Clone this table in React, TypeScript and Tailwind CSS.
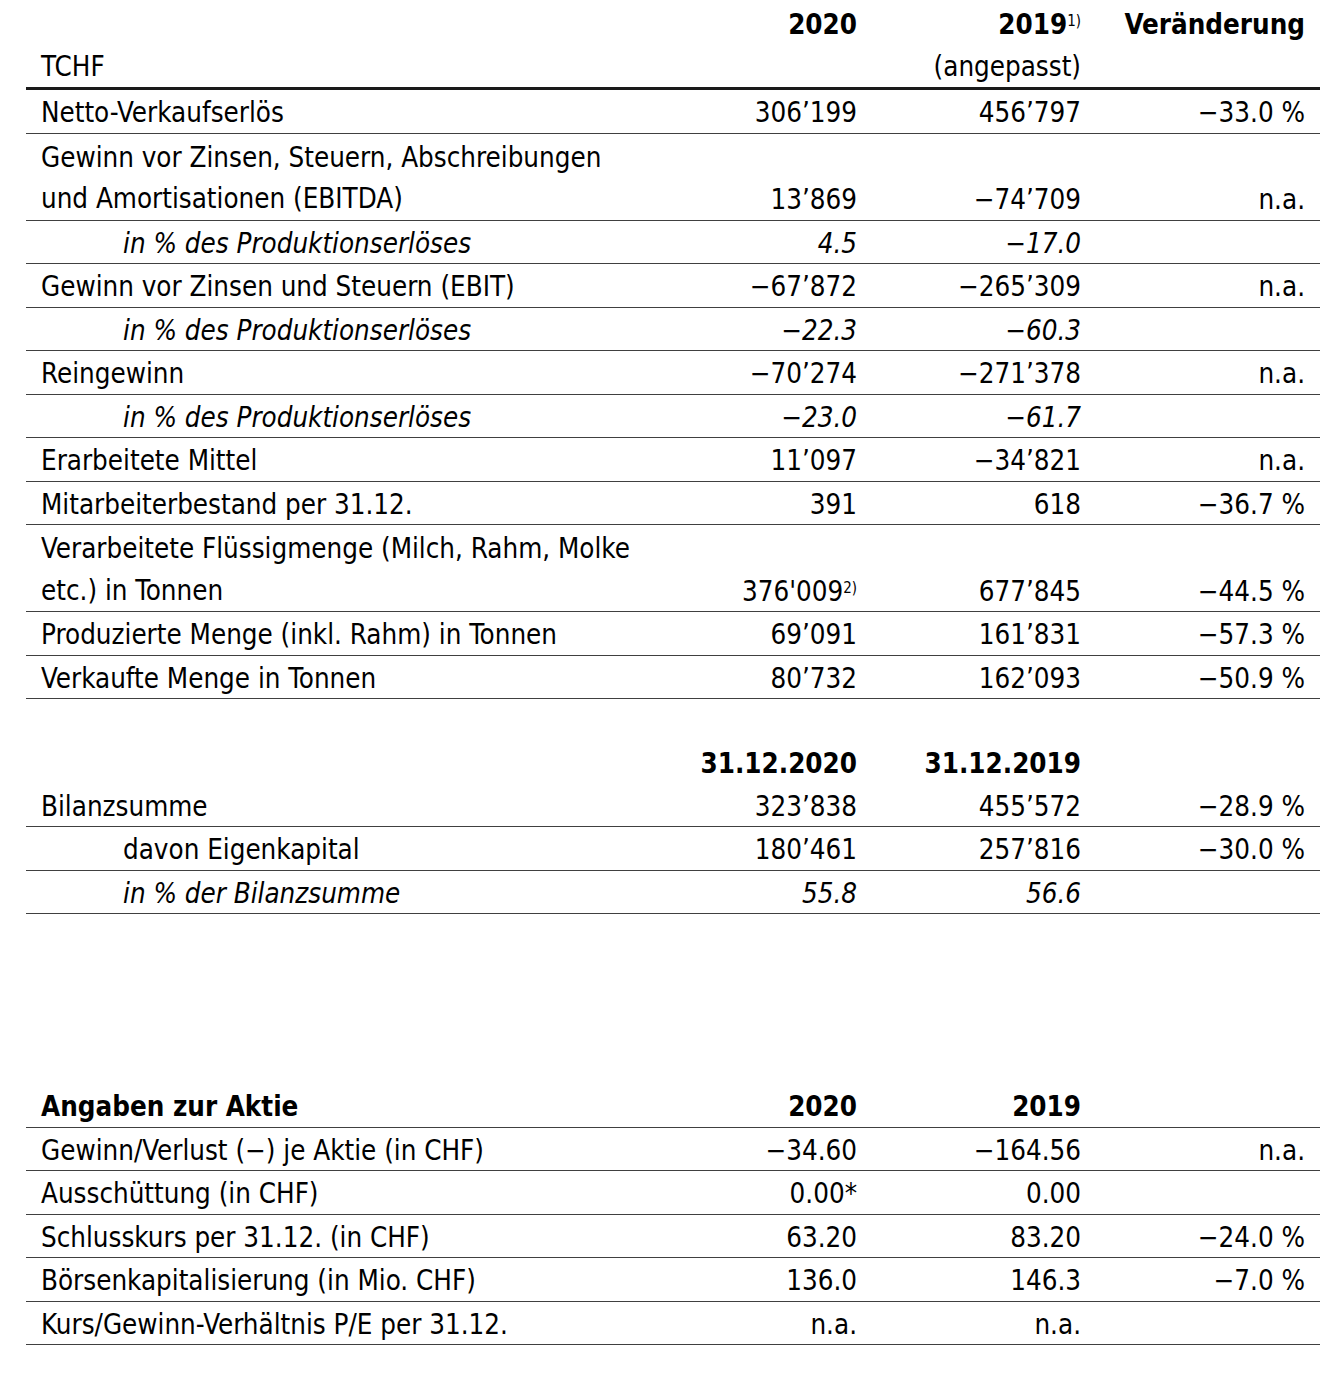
import React from "react";

type Row = {
  label: React.ReactNode;
  a?: React.ReactNode;
  b?: React.ReactNode;
  c?: React.ReactNode;
  sub?: "italic" | "indent";
  lines?: 1 | 2;
};

const Sup = ({ children }: { children: React.ReactNode }) => (
  <sup className="text-[15px] font-normal not-italic relative -top-[8px] align-baseline">{children}</sup>
);

function TableRow({ label, a, b, c, sub, lines = 1 }: Row) {
  return (
    <div
      className={`grid grid-cols-[622px_224px_224px_224px] border-b border-[#404040] leading-[39.5px] ${
        sub === "italic" ? "italic" : ""
      }`}
    >
      <div className={`pt-[3px] ${sub ? "pl-[97px]" : "pl-[15px]"} ${lines === 2 ? "leading-[41.5px]" : ""}`}>
        {label}
      </div>
      <div className="pr-[15px] text-right self-end">{a}</div>
      <div className="pr-[15px] text-right self-end">{b}</div>
      <div className="pr-[15px] text-right self-end">{c}</div>
    </div>
  );
}

export default function App() {
  return (
    <div className="w-[1322px] h-[1395px] bg-white text-black font-['DejaVu_Sans_Condensed','DejaVu_Sans',sans-serif] text-[27.5px]">
      <div className="ml-[26px] w-[1294px]">
        {/* Kennzahlen */}
        <div className="grid grid-cols-[622px_224px_224px_224px] border-b-[3px] border-[#1a1a1a] leading-[42px] pt-[3px]">
          <div className="pl-[15px] pt-[42px]">TCHF</div>
          <div className="pr-[15px] text-right font-bold">2020</div>
          <div className="pr-[15px] text-right">
            <span className="font-bold">
              2019<Sup>1)</Sup>
            </span>
            <br />
            (angepasst)
          </div>
          <div className="pr-[15px] text-right font-bold">Veränderung</div>
        </div>
        <TableRow label="Netto-Verkaufserlös" a="306’199" b="456’797" c="−33.0 %" />
        <TableRow
          lines={2}
          label={
            <>
              Gewinn vor Zinsen, Steuern, Abschreibungen
              <br />
              und Amortisationen (EBITDA)
            </>
          }
          a="13’869"
          b="−74’709"
          c="n.a."
        />
        <TableRow sub="italic" label="in % des Produktionserlöses" a="4.5" b="−17.0" />
        <TableRow label="Gewinn vor Zinsen und Steuern (EBIT)" a="−67’872" b="−265’309" c="n.a." />
        <TableRow sub="italic" label="in % des Produktionserlöses" a="−22.3" b="−60.3" />
        <TableRow label="Reingewinn" a="−70’274" b="−271’378" c="n.a." />
        <TableRow sub="italic" label="in % des Produktionserlöses" a="−23.0" b="−61.7" />
        <TableRow label="Erarbeitete Mittel" a="11’097" b="−34’821" c="n.a." />
        <TableRow label="Mitarbeiterbestand per 31.12." a="391" b="618" c="−36.7 %" />
        <TableRow
          lines={2}
          label={
            <>
              Verarbeitete Flüssigmenge (Milch, Rahm, Molke
              <br />
              etc.) in Tonnen
            </>
          }
          a={
            <>
              376'009<Sup>2)</Sup>
            </>
          }
          b="677’845"
          c="−44.5 %"
        />
        <TableRow label="Produzierte Menge (inkl. Rahm) in Tonnen" a="69’091" b="161’831" c="−57.3 %" />
        <TableRow label="Verkaufte Menge in Tonnen" a="80’732" b="162’093" c="−50.9 %" />

        {/* Bilanz */}
        <div className="h-[41px]" />
        <div className="grid grid-cols-[622px_224px_224px_224px] font-bold leading-[40.5px] pt-[3px]">
          <div />
          <div className="pr-[15px] text-right">31.12.2020</div>
          <div className="pr-[15px] text-right">31.12.2019</div>
          <div />
        </div>
        <TableRow label="Bilanzsumme" a="323’838" b="455’572" c="−28.9 %" />
        <TableRow sub="indent" label="davon Eigenkapital" a="180’461" b="257’816" c="−30.0 %" />
        <TableRow sub="italic" label="in % der Bilanzsumme" a="55.8" b="56.6" />

        {/* Aktie */}
        <div className="h-[170px]" />
        <div className="grid grid-cols-[622px_224px_224px_224px] font-bold border-b border-[#404040] leading-[39.5px] pt-[3px]">
          <div className="pl-[15px]">Angaben zur Aktie</div>
          <div className="pr-[15px] text-right">2020</div>
          <div className="pr-[15px] text-right">2019</div>
          <div />
        </div>
        <TableRow label="Gewinn/Verlust (−) je Aktie (in CHF)" a="−34.60" b="−164.56" c="n.a." />
        <TableRow label="Ausschüttung (in CHF)" a="0.00*" b="0.00" />
        <TableRow label="Schlusskurs per 31.12. (in CHF)" a="63.20" b="83.20" c="−24.0 %" />
        <TableRow label="Börsenkapitalisierung (in Mio. CHF)" a="136.0" b="146.3" c="−7.0 %" />
        <TableRow label="Kurs/Gewinn-Verhältnis P/E per 31.12." a="n.a." b="n.a." />
      </div>
    </div>
  );
}
